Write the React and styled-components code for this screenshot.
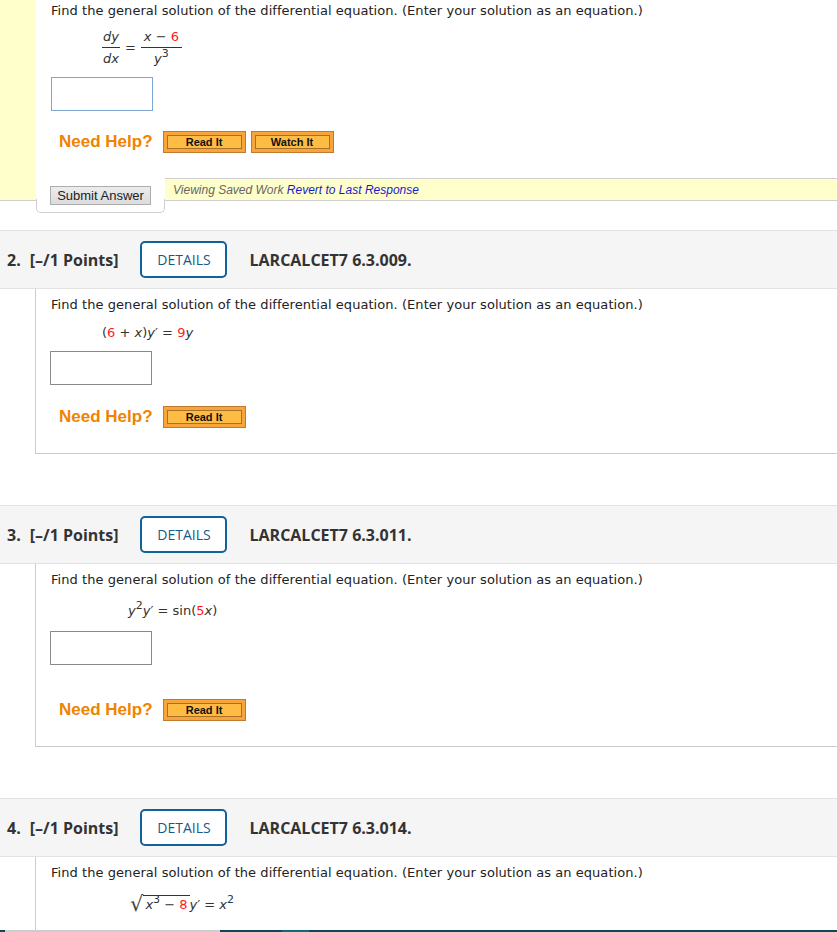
import React from "react"
import styled, { createGlobalStyle } from "styled-components"

const GlobalStyle = createGlobalStyle`
  body {
    margin: 0;
    background: #fff;
    font-family: "DejaVu Sans", Verdana, sans-serif;
    color: #222;
  }
`

const PROMPT =
  "Find the general solution of the differential equation. (Enter your solution as an equation.)"

export default function App() {
  return (
    <Page>
      <GlobalStyle />
      <TopQuestion>
        <YellowRail />
        <TopBody>
          <Inner>
            <Prompt>{PROMPT}</Prompt>
            <Equation $indent={51} $top={10}>
              <Frac>
                <Num><I>dy</I></Num>
                <Den><I>dx</I></Den>
              </Frac>
              <Eq>=</Eq>
              <Frac>
                <Num $wide><I>x</I> − <Red>6</Red></Num>
                <Den><I>y</I><Sup>3</Sup></Den>
              </Frac>
            </Equation>
            <AnswerBox $focus $top={10} />
            <HelpRow $top={20}>
              <NeedHelp>Need Help?</NeedHelp>
              <HelpButton><span>Read It</span></HelpButton>
              <HelpButton><span>Watch It</span></HelpButton>
            </HelpRow>
          </Inner>
          <SubmitRow>
            <SubmitCell>
              <SubmitButton>Submit Answer</SubmitButton>
            </SubmitCell>
            <SavedBar>
              Viewing Saved Work <Revert>Revert to Last Response</Revert>
            </SavedBar>
          </SubmitRow>
        </TopBody>
      </TopQuestion>

      <Question num="2." code="LARCALCET7 6.3.009." top={17} boxTop={9} helpTop={21}>
        <Equation $indent={51} $top={11}>
          (<Red>6</Red> + <I>x</I>)<I>y</I>′ = <Red>9</Red><I>y</I>
        </Equation>
      </Question>

      <Question num="3." code="LARCALCET7 6.3.011." top={51} boxTop={11} helpTop={34}>
        <Equation $indent={77} $top={14}>
          <I>y</I><Sup>2</Sup><I>y</I>′ = sin(<Red>5</Red><I>x</I>)
        </Equation>
      </Question>

      <Question num="4." code="LARCALCET7 6.3.014." top={51} last>
        <Equation $indent={79} $top={14}>
          <Radical>√</Radical>
          <Radicand>
            <I>x</I><Sup>3</Sup> − <Red>8</Red>
          </Radicand>
          <I>y</I>′ = <I>x</I><Sup>2</Sup>
        </Equation>
      </Question>

      <Strip>
        <Seg $w={5} $c="#0d4a55" />
        <Seg $w={215} $c="#c9cfd0" />
        <Seg $w={62} $c="#0d4a55" />
        <Seg $w={27} $c="#146a78" />
        <Seg $w={528} $c="#0d4a55" />
      </Strip>
    </Page>
  )
}

function Question({ num, code, top, boxTop, helpTop, last, children }) {
  return (
    <QuestionBlock $top={top}>
      <QHeader>
        <QNum>{num}</QNum>
        <QPoints>[–/1 Points]</QPoints>
        <DetailsButton>DETAILS</DetailsButton>
        <QCode>{code}</QCode>
      </QHeader>
      <QBody $last={last}>
        <Prompt>{PROMPT}</Prompt>
        {children}
        {!last && (
          <>
            <AnswerBox $top={boxTop} $shift />
            <HelpRow $top={helpTop}>
              <NeedHelp>Need Help?</NeedHelp>
              <HelpButton><span>Read It</span></HelpButton>
            </HelpRow>
          </>
        )}
      </QBody>
    </QuestionBlock>
  )
}

const Page = styled.div`
  width: 837px;
  height: 932px;
  overflow: hidden;
`

const TopQuestion = styled.div`
  display: flex;
  align-items: flex-start;
`

const YellowRail = styled.div`
  width: 36px;
  height: 201px;
  flex: 0 0 auto;
  box-sizing: border-box;
  background: #ffffcc;
  border-bottom: 1px solid #cfcfcf;
`

const TopBody = styled.div`
  flex: 1;
  display: flex;
  flex-direction: column;
`

const Inner = styled.div`
  padding: 3px 0 0 15px;
`

const Prompt = styled.div`
  font-size: 13px;
  line-height: 16px;
  letter-spacing: 0.055px;
  color: #222;
`

const Equation = styled.div`
  margin: ${(p) => p.$top}px 0 0 ${(p) => p.$indent}px;
  font-size: 13px;
  line-height: 18px;
  color: #333;
  white-space: pre;
`

const I = styled.i`
  font-style: italic;
`

const Red = styled.span`
  color: #ff1a1a;
`

const Sup = styled.sup`
  font-size: 11px;
  line-height: 0;
  vertical-align: 6px;
`

const Frac = styled.span`
  display: inline-flex;
  flex-direction: column;
  align-items: center;
  vertical-align: middle;
`

const Num = styled.span`
  padding: 0 ${(p) => (p.$wide ? 3 : 1)}px 2px;
  border-bottom: 1px solid #333;
  line-height: 16px;
`

const Den = styled.span`
  padding-top: 3px;
  line-height: 16px;
`

const Eq = styled.span`
  display: inline-block;
  margin: 0 5px;
  vertical-align: middle;
`

const Radical = styled.span`
  font-size: 21px;
  line-height: 0;
  color: #444;
  vertical-align: -2px;
`

const Radicand = styled.span`
  display: inline-block;
  border-top: 1px solid #333;
  padding: 1px 2px 0 2px;
  line-height: 16px;
`

const AnswerBox = styled.div`
  width: 102px;
  height: 34px;
  box-sizing: border-box;
  margin: ${(p) => p.$top}px 0 0 ${(p) => (p.$shift ? -1 : 0)}px;
  border: 1px solid ${(p) => (p.$focus ? "#7fa6d3" : "#8a8a8a")};
  background: #fff;
`

const HelpRow = styled.div`
  display: flex;
  align-items: center;
  gap: 5px;
  height: 22px;
  margin: ${(p) => p.$top}px 0 0 8px;
`

const NeedHelp = styled.span`
  font-family: "Liberation Sans", Arial, sans-serif;
  font-weight: bold;
  font-size: 17px;
  color: #f08300;
  margin-right: 5px;
`

const HelpButton = styled.span`
  display: flex;
  width: 83px;
  height: 22px;
  box-sizing: border-box;
  padding: 3px 3px;
  border: 1px solid #c27b2e;
  background: #f6a43c;

  span {
    flex: 1;
    display: flex;
    align-items: center;
    justify-content: center;
    border: 1px solid #a8712a;
    background: #ffbc45;
    font-family: "Liberation Sans", Arial, sans-serif;
    font-weight: bold;
    font-size: 11px;
    color: #111;
  }
`

const SubmitRow = styled.div`
  display: flex;
  align-items: flex-start;
  margin-top: 25px;
`

const SubmitCell = styled.div`
  position: relative;
  width: 129px;
  height: 35px;
  box-sizing: border-box;
  padding: 8px 0 0 14px;

  &::after {
    content: "";
    position: absolute;
    left: 0;
    right: 0;
    top: 21px;
    bottom: 0;
    border: 1px solid #cfcfcf;
    border-top: none;
    border-radius: 0 0 5px 5px;
  }
`

const SubmitButton = styled.div`
  position: relative;
  z-index: 1;
  width: 101px;
  height: 19px;
  box-sizing: border-box;
  display: flex;
  align-items: center;
  justify-content: center;
  background: linear-gradient(#ececec, #dcdcdc);
  border: 1px solid #adadad;
  font-family: "Liberation Sans", Arial, sans-serif;
  font-size: 13px;
  color: #222;
`

const SavedBar = styled.div`
  flex: 1;
  height: 23px;
  box-sizing: border-box;
  display: flex;
  align-items: center;
  padding-left: 8px;
  background: #ffffcc;
  border-top: 1px solid #cfcfcf;
  border-bottom: 1px solid #cfcfcf;
  font-family: "Liberation Sans", Arial, sans-serif;
  font-style: italic;
  font-size: 12px;
  color: #666;
  white-space: pre;
`

const Revert = styled.span`
  color: #1a1acc;
`

const QuestionBlock = styled.div`
  margin-top: ${(p) => p.$top}px;
`

const QHeader = styled.div`
  display: flex;
  align-items: center;
  height: 59px;
  box-sizing: border-box;
  padding-left: 7px;
  background: #f5f5f5;
  border-top: 1px solid #e2e2e2;
  border-bottom: 1px solid #e2e2e2;
  font-family: "Open Sans", sans-serif;
  font-weight: 700;
  font-size: 16px;
  color: #333;
`

const QNum = styled.span`
  margin-right: 9px;
`

const QPoints = styled.span`
  margin-right: 22px;
`

const DetailsButton = styled.span`
  display: flex;
  align-items: center;
  justify-content: center;
  width: 87px;
  height: 37px;
  box-sizing: border-box;
  border: 2px solid #0f629a;
  border-radius: 5px;
  background: #fff;
  font-weight: 400;
  font-size: 14px;
  color: #1a5887;
  margin-right: 22px;
`

const QCode = styled.span`
  font-weight: 700;
`

const QBody = styled.div`
  margin-left: 35px;
  border-left: 1px solid #cccccc;
  border-bottom: ${(p) => (p.$last ? "none" : "1px solid #cccccc")};
  padding: 8px 0 ${(p) => (p.$last ? 0 : 25)}px 15px;
  height: ${(p) => (p.$last ? "73px" : "auto")};
  box-sizing: ${(p) => (p.$last ? "border-box" : "content-box")};
`

const Strip = styled.div`
  display: flex;
  height: 2px;
`

const Seg = styled.span`
  width: ${(p) => p.$w}px;
  background: ${(p) => p.$c};
`
